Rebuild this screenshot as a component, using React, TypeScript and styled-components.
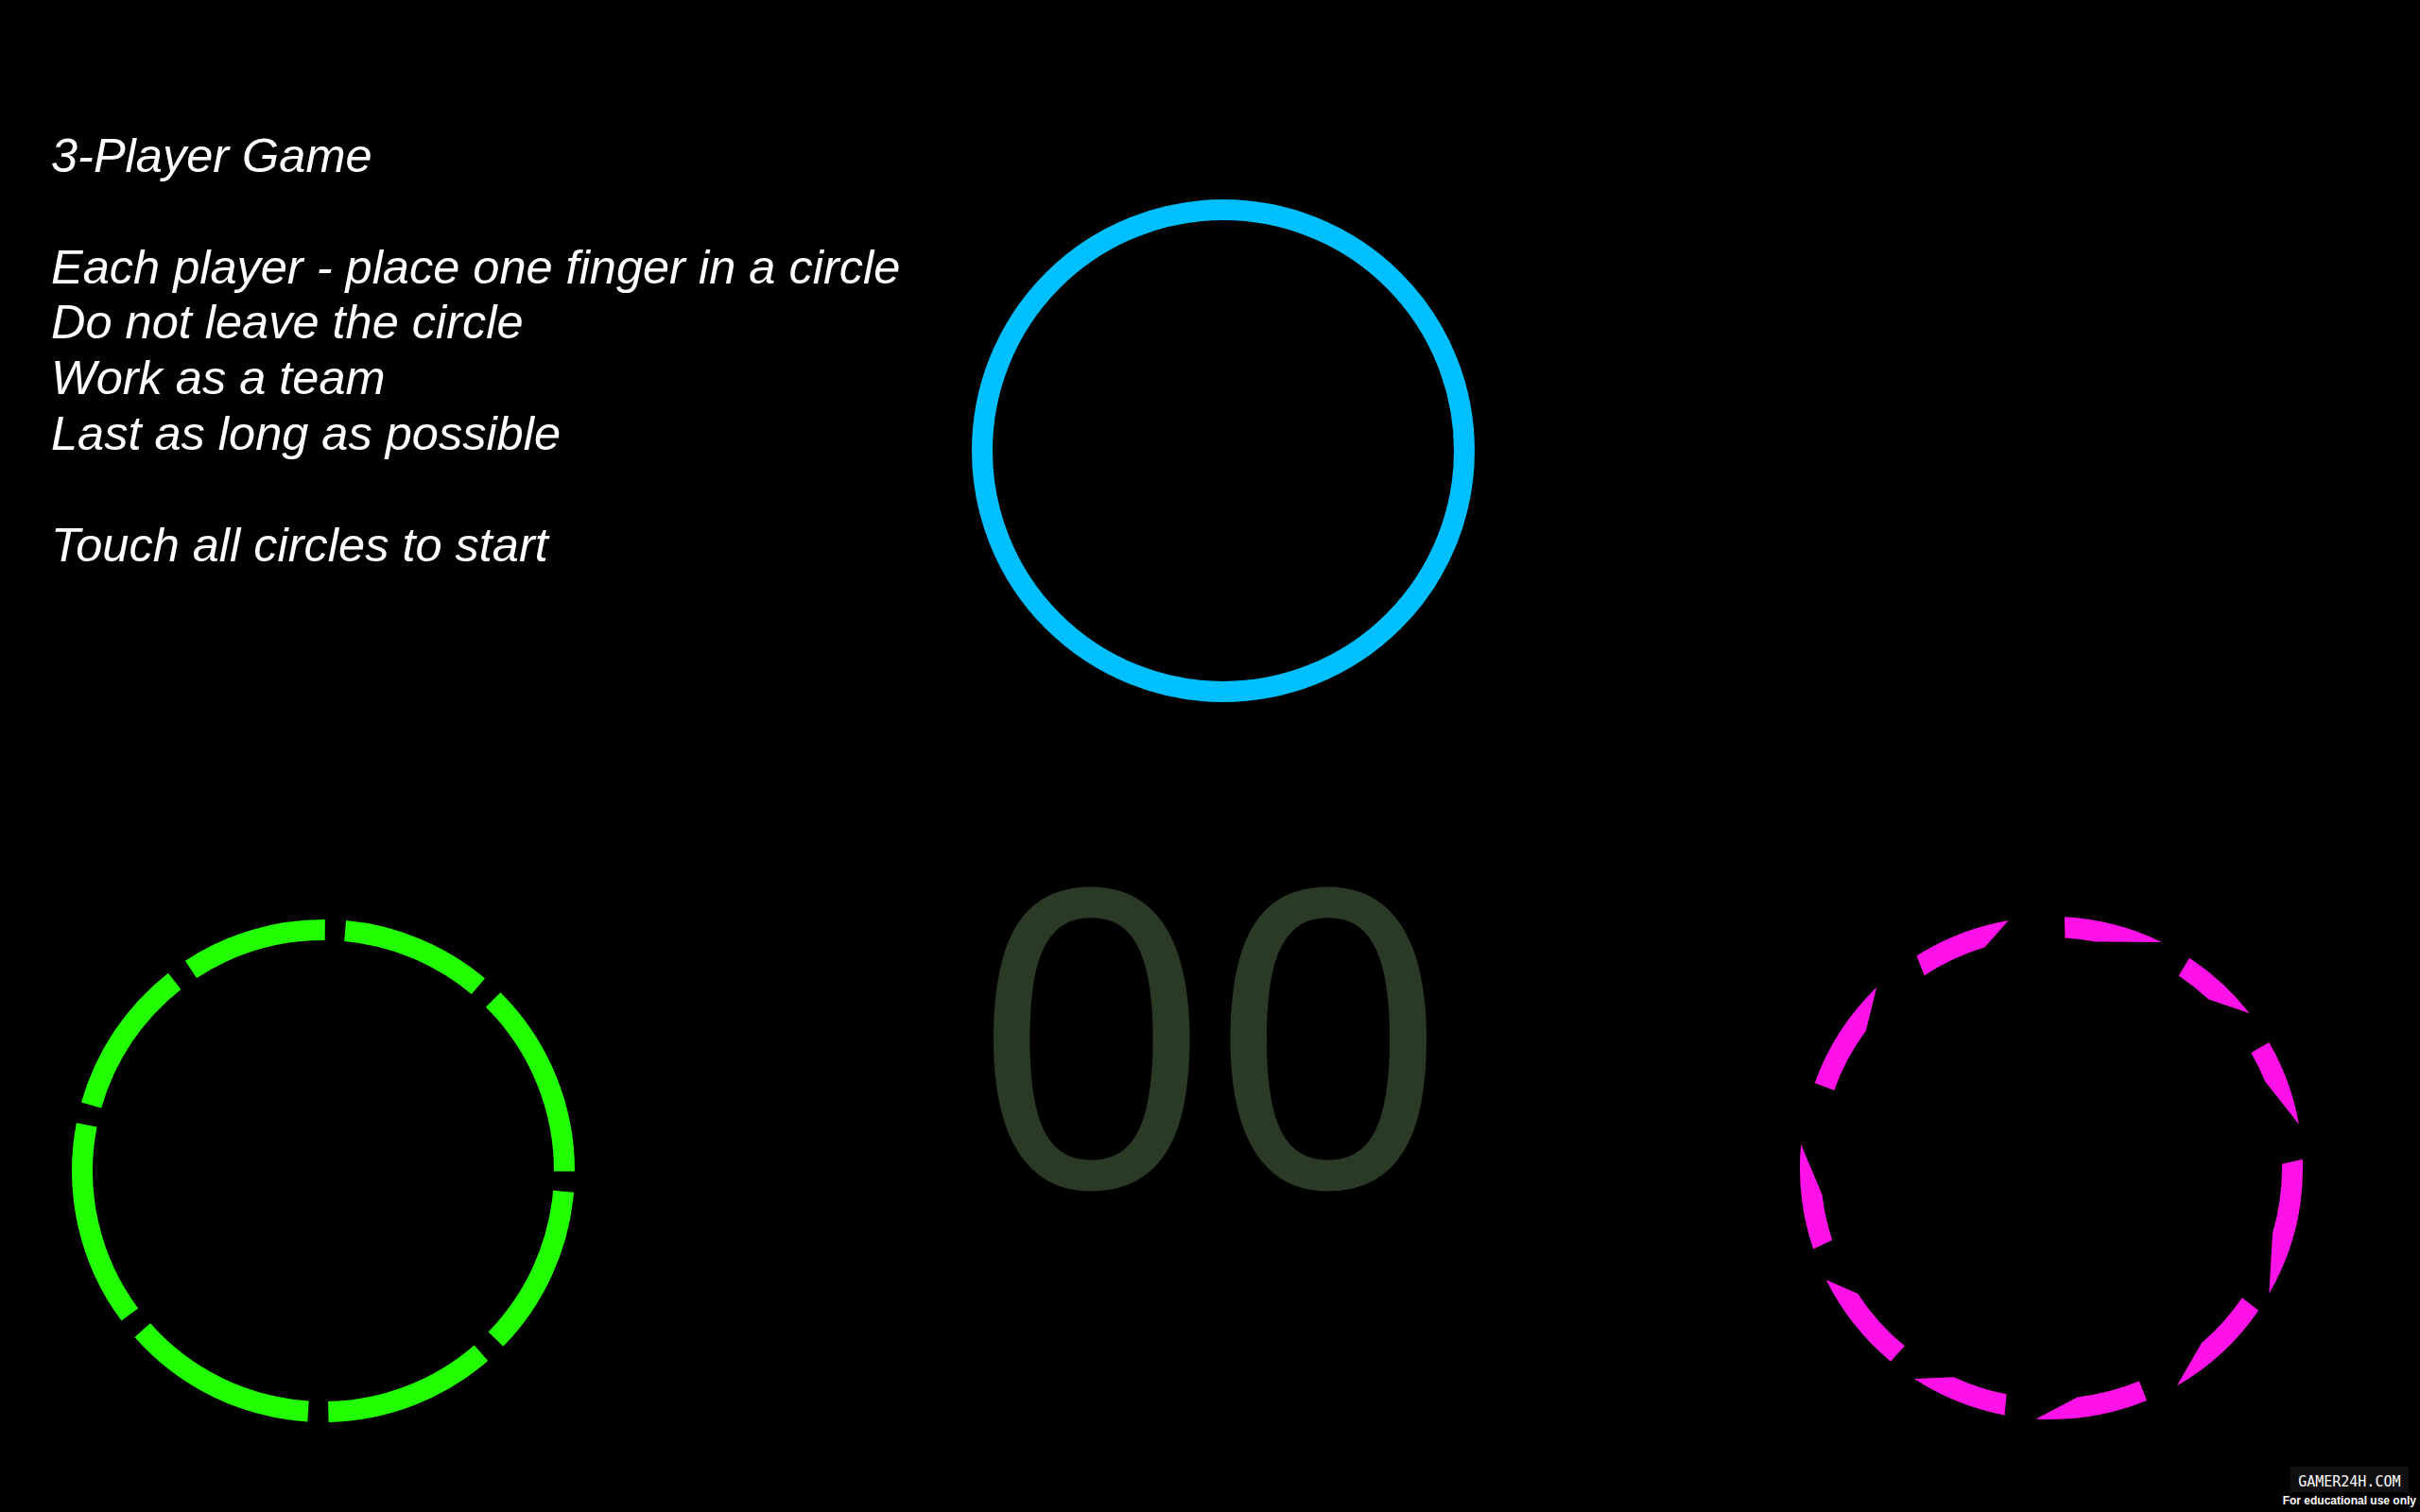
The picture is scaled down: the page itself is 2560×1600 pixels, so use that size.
import React from "react";
import styled, { createGlobalStyle } from "styled-components";

const GlobalStyle = createGlobalStyle`
  html, body {
    margin: 0;
    padding: 0;
    background: #000;
  }
  body {
    font-family: "Liberation Sans", Arial, sans-serif;
  }
`;

const Page = styled.main`
  position: relative;
  display: grid;
  grid-template-columns: 1fr;
  grid-template-rows: 1fr auto;
  width: 100vw;
  height: 100vh;
  min-height: 1600px;
  background: #000;
  overflow: hidden;
`;

const Instructions = styled.section`
  display: flex;
  flex-direction: column;
  align-self: start;
  padding: 136px 0 0 54px;
  font-family: "Liberation Sans", Arial, sans-serif;
  font-style: italic;
  font-size: 50.5px;
  line-height: 58.8px;
  color: #ffffff;
`;

const Line = styled.div`
  white-space: nowrap;
`;

const Gap = styled.div`
  height: 58.8px;
`;

const Counter = styled.div`
  position: absolute;
  left: 0;
  right: 0;
  top: 866px;
  text-align: center;
  font-family: "Noto Sans", "Open Sans", sans-serif;
  font-size: 438px;
  line-height: 440px;
  font-weight: 400;
  color: #2a3a24;
`;

const Ring = styled.svg<{ $x: number; $y: number }>`
  position: absolute;
  left: ${(p) => p.$x - 280}px;
  top: ${(p) => p.$y - 280}px;
  width: 560px;
  height: 560px;
  overflow: visible;
`;

const Watermark = styled.aside`
  justify-self: end;
  display: flex;
  flex-direction: column;
  align-items: center;
  padding: 0 4px 5px 0;
`;

const Brand = styled.div`
  background: #0f0f0f;
  padding: 8px 8px 3px;
  font-family: "DejaVu Sans Mono", "Liberation Mono", monospace;
  font-size: 15px;
  line-height: 16px;
  color: #ffffff;
`;

const Note = styled.div`
  margin-top: 2px;
  font-family: "Liberation Sans", Arial, sans-serif;
  font-weight: 700;
  font-size: 12px;
  line-height: 14px;
  color: #ffffff;
  white-space: nowrap;
`;

const C = 280;

const pt = (r: number, deg: number) => {
  const a = (deg * Math.PI) / 180;
  return [C + r * Math.sin(a), C - r * Math.cos(a)];
};

const f = (n: number) => n.toFixed(2);

const arcPath = (r: number, a1: number, a2: number) => {
  const [x1, y1] = pt(r, a1);
  const [x2, y2] = pt(r, a2);
  const large = a2 - a1 > 180 ? 1 : 0;
  return `M${f(x1)} ${f(y1)} A${r} ${r} 0 ${large} 1 ${f(x2)} ${f(y2)}`;
};

const wedgePath = (o1: number, o2: number, i1: number, i2: number) => {
  const R = 266;
  const r = 244;
  const [ax, ay] = pt(R, o1);
  const [bx, by] = pt(R, o2);
  const [cx, cy] = pt(r, i2);
  const [dx, dy] = pt(r, i1);
  return `M${f(ax)} ${f(ay)} A${R} ${R} 0 0 1 ${f(bx)} ${f(by)} L${f(cx)} ${f(cy)} A${r} ${r} 0 0 0 ${f(dx)} ${f(dy)} Z`;
};

const greenSegments: [number, number][] = [
  [5.2, 40],
  [44.8, 90.1],
  [94.9, 134.3],
  [139.1, 178.8],
  [183.6, 228.6],
  [233.4, 281],
  [285.8, 321.9],
  [326.7, 360.4],
];

const pinkSegments: [number, number, number, number][] = [
  [3, 26, 3.4, 11],
  [33.3, 52, 33.5, 43],
  [60, 80, 60, 68],
  [88, 120, 89, 106.5],
  [124.5, 150, 124.2, 139.4],
  [157.7, 183.5, 157.6, 173.5],
  [190.7, 213, 191.2, 205],
  [219.7, 243.6, 219.5, 237],
  [251.2, 275.4, 251.8, 263.3],
  [289.8, 316, 289.7, 306.5],
  [327.6, 350.2, 326.6, 343.2],
];

const lines = [
  "3-Player Game",
  "",
  "Each player - place one finger in a circle",
  "Do not leave the circle",
  "Work as a team",
  "Last as long as possible",
  "",
  "Touch all circles to start",
];

export default function App() {
  return (
    <>
      <GlobalStyle />
      <Page>
        <Instructions>
          {lines.map((l, i) => (l ? <Line key={i}>{l}</Line> : <Gap key={i} />))}
        </Instructions>

        <Counter>00</Counter>

        <Ring $x={1294} $y={477} viewBox="0 0 560 560">
          <circle cx={C} cy={C} r={255} fill="none" stroke="#00bfff" strokeWidth={22} />
        </Ring>

        <Ring $x={342} $y={1238.5} viewBox="0 0 560 560">
          {greenSegments.map(([a, b], i) => (
            <path
              key={i}
              d={arcPath(255, a, b)}
              fill="none"
              stroke="#22ff00"
              strokeWidth={22}
              strokeLinecap="butt"
            />
          ))}
        </Ring>

        <Ring $x={2170} $y={1236} viewBox="0 0 560 560">
          {pinkSegments.map(([o1, o2, i1, i2], i) => (
            <path key={i} d={wedgePath(o1, o2, i1, i2)} fill="#ff12e8" />
          ))}
        </Ring>

        <Watermark>
          <Brand>GAMER24H.COM</Brand>
          <Note>For educational use only</Note>
        </Watermark>
      </Page>
    </>
  );
}
